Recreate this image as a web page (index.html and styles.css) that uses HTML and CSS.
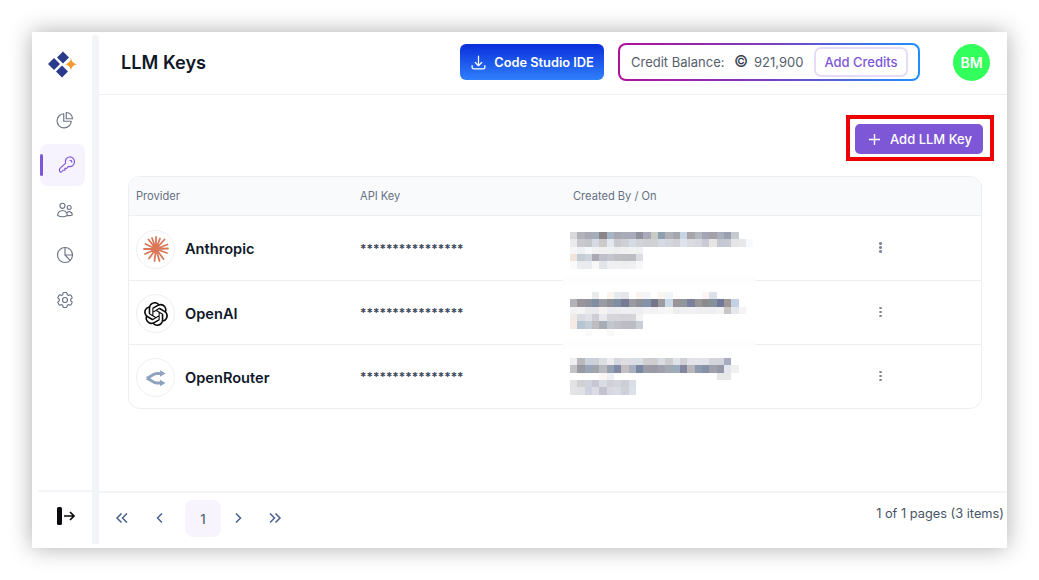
FILE: index.html
```html
<!DOCTYPE html>
<html lang="en">
<head>
<meta charset="utf-8">
<title>LLM Keys</title>
<link rel="stylesheet" href="styles.css">
</head>
<body>
<div class="shell">
  <aside class="sidebar">
    <div class="logo">
      <svg width="32" height="28" viewBox="0 0 32 28">
        <g fill="#2b3a8a">
          <path d="M16 1.500l6 6-6 6-6-6z"/>
          <path d="M7 8l6 6-6 6-6-6z"/>
          <path d="M15 15.500l6 6-6 6-6-6z"/>
        </g>
        <path d="M24 7.500c.5 4 2 6 6.500 6.800-4.500.8-6 2.800-6.500 6.700-.5-3.900-2-5.900-6.500-6.700 4.500-.8 6-2.800 6.500-6.800z" fill="#f79a2e"/>
      </svg>
    </div>
    <nav class="nav">
      <a class="nav-item"><svg class="nav-icon" viewBox="0 0 24 24"><path d="M10.500 4.500a8.500 8.500 0 1 0 9 9h-9V4.500Z"/><path d="M13.500 3v7.500H21A7.500 7.500 0 0 0 13.500 3Z"/></svg></a>
      <a class="nav-item active"><svg class="nav-icon" viewBox="0 0 24 24"><path d="M21 8.500a5.500 5.500 0 0 1-7.200 5.200L11.500 16H9.500v2.300H7.200L6 19.800C5 21 3 21 3 19v-1.500c0-.6.2-1.100.6-1.500l6.800-6.200A5.500 5.500 0 1 1 21 8.500Z"/><path d="M15.500 6.300a2.200 2.200 0 0 1 2.300 2.200"/></svg></a>
      <a class="nav-item small"><svg class="nav-icon" viewBox="0 0 24 24"><path d="M15 19.128a9.380 9.380 0 0 0 2.625.372 9.337 9.337 0 0 0 4.121-.952 4.125 4.125 0 0 0-7.533-2.493M15 19.128v-.003c0-1.113-.285-2.160-.786-3.070M15 19.128v.106A12.318 12.318 0 0 1 8.624 21c-2.331 0-4.512-.645-6.374-1.766l-.001-.109a6.375 6.375 0 0 1 11.964-3.070M12 6.375a3.375 3.375 0 1 1-6.750 0 3.375 3.375 0 0 1 6.750 0Zm8.250 2.250a2.625 2.625 0 1 1-5.250 0 2.625 2.625 0 0 1 5.250 0Z"/></svg></a>
      <a class="nav-item"><svg class="nav-icon" viewBox="0 0 24 24"><circle cx="12" cy="12" r="9"/><path d="M12 3v9h9M12 12l6.200 6.500"/></svg></a>
      <a class="nav-item"><svg class="nav-icon" viewBox="0 0 24 24"><path d="M9.594 3.940c.09-.542.56-.94 1.110-.94h2.593c.55 0 1.020.398 1.110.94l.213 1.281c.063.374.313.686.645.87.074.04.147.083.22.127.325.196.72.257 1.075.124l1.217-.456a1.125 1.125 0 0 1 1.370.49l1.296 2.247a1.125 1.125 0 0 1-.26 1.431l-1.003.827c-.293.241-.438.613-.43.992a7.723 7.723 0 0 1 0 .255c-.008.378.137.75.43.991l1.004.827c.424.35.534.955.26 1.430l-1.298 2.247a1.125 1.125 0 0 1-1.369.491l-1.217-.456c-.355-.133-.75-.072-1.076.124a6.470 6.470 0 0 1-.22.128c-.331.183-.581.495-.644.869l-.213 1.281c-.09.543-.56.94-1.110.94h-2.594c-.55 0-1.019-.398-1.110-.94l-.213-1.281c-.062-.374-.312-.686-.644-.87a6.520 6.520 0 0 1-.22-.127c-.325-.196-.72-.257-1.076-.124l-1.217.456a1.125 1.125 0 0 1-1.369-.49l-1.297-2.247a1.125 1.125 0 0 1 .26-1.431l1.004-.827c.292-.24.437-.613.43-.991a6.932 6.932 0 0 1 0-.255c.007-.38-.138-.751-.43-.992l-1.004-.827a1.125 1.125 0 0 1-.26-1.430l1.297-2.247a1.125 1.125 0 0 1 1.370-.491l1.216.456c.356.133.751.072 1.076-.124.072-.044.146-.086.22-.128.332-.183.582-.495.644-.869l.214-1.280Z"/><path d="M15 12a3 3 0 1 1-6 0 3 3 0 0 1 6 0Z"/></svg></a>
    </nav>
    <div class="side-foot">
      <svg width="20" height="20" viewBox="0 0 20 20" class="logout"><rect x="1" y="1" width="5" height="18" rx="1.500" fill="#0b0b0f"/><path d="M8 10h10M14 6l4 4-4 4" fill="none" stroke="#0b0b0f" stroke-width="1.700"/></svg>
    </div>
  </aside>
  <div class="divider"></div>
  <div class="main">
    <header class="topbar">
      <h1 class="title">LLM Keys</h1>
      <a class="studio-btn">
        <svg class="studio-icon" viewBox="0 0 24 24"><path d="M3 16.500v2.250A2.250 2.250 0 0 0 5.250 21h13.500A2.250 2.250 0 0 0 21 18.750V16.500M16.500 12 12 16.500m0 0L7.500 12m4.500 4.500V3"/></svg>
        Code Studio IDE
      </a>
      <div class="credit">
        <div class="credit-inner">
          <span class="credit-label">Credit Balance:</span>
          <span class="coin">©</span>
          <span class="credit-value">921,900</span>
          <a class="add-credits">Add Credits</a>
        </div>
      </div>
      <div class="avatar">BM</div>
    </header>
    <section class="content">
      <div class="actions">
        <a class="add-key">
          <svg class="plus" viewBox="0 0 14 14"><path d="M7 1v12M1 7h12"/></svg>
          Add LLM Key
        </a>
        <span class="callout"></span>
      </div>
      <div class="table">
        <div class="row head">
          <div class="cell first">Provider</div>
          <div class="cell">API Key</div>
          <div class="cell">Created By / On</div>
          <div class="cell"></div>
        </div>
        <div class="row">
          <div class="cell provider">
            <span class="badge">
              <svg width="26" height="26" viewBox="0 0 26 26" class="burst"><path d="M13 13L13 1M13 13L17 2.500M13 13L21.500 3.500M13 13L24.500 8.500M13 13L25 12.500M13 13L24 17M13 13L20.500 23M13 13L16.500 25M13 13L11.500 25M13 13L6 22.500M13 13L2 18M13 13L1 13M13 13L2.500 8M13 13L5.500 3.500M13 13L9 2"/></svg>
            </span>
            Anthropic
          </div>
          <div class="cell stars">****************</div>
          <div class="cell created"><div class="mosaic m1" data-m="0"></div></div>
          <div class="cell dots-cell"><span class="dots"><i></i><i></i><i></i></span></div>
        </div>
        <div class="row">
          <div class="cell provider">
            <span class="badge">
              <svg width="24" height="24" viewBox="0 0 24 24" fill="#0d0d0d"><path d="M22.2819 9.8211a5.9847 5.9847 0 0 0-.5157-4.9108 6.0462 6.0462 0 0 0-6.5098-2.9A6.0651 6.0651 0 0 0 4.9807 4.1818a5.9847 5.9847 0 0 0-3.9977 2.9 6.0462 6.0462 0 0 0 .7427 7.0966 5.98 5.98 0 0 0 .511 4.9107 6.051 6.051 0 0 0 6.5146 2.9001A5.9847 5.9847 0 0 0 13.2599 24a6.0557 6.0557 0 0 0 5.7718-4.2058 5.9894 5.9894 0 0 0 3.9977-2.9001 6.0557 6.0557 0 0 0-.7475-7.0729zm-9.022 12.6081a4.4755 4.4755 0 0 1-2.8764-1.0408l.1419-.0804 4.7783-2.7582a.7948.7948 0 0 0 .3927-.6813v-6.7369l2.02 1.1686a.071.071 0 0 1 .038.052v5.5826a4.504 4.504 0 0 1-4.4945 4.4944zm-9.6607-4.1254a4.4708 4.4708 0 0 1-.5346-3.0137l.142.0852 4.783 2.7582a.7712.7712 0 0 0 .7806 0l5.8428-3.3685v2.3324a.0804.0804 0 0 1-.0332.0615L9.74 19.9502a4.4992 4.4992 0 0 1-6.1408-1.6464zM2.3408 7.8956a4.485 4.485 0 0 1 2.3655-1.9728V11.6a.7664.7664 0 0 0 .3879.6765l5.8144 3.3543-2.0201 1.1685a.0757.0757 0 0 1-.071 0l-4.8303-2.7865A4.504 4.504 0 0 1 2.3408 7.872zm16.5963 3.8558L13.1038 8.364 15.1192 7.2a.0757.0757 0 0 1 .071 0l4.8303 2.7913a4.4944 4.4944 0 0 1-.6765 8.1042v-5.6772a.79.79 0 0 0-.407-.667zm2.0107-3.0231l-.142-.0852-4.7735-2.7818a.7759.7759 0 0 0-.7854 0L9.409 9.2297V6.8974a.0662.0662 0 0 1 .0284-.0615l4.8303-2.7866a4.4992 4.4992 0 0 1 6.6802 4.66zM8.3065 12.863l-2.02-1.1638a.0804.0804 0 0 1-.038-.0567V6.0742a4.4992 4.4992 0 0 1 7.3757-3.4537l-.142.0805L8.704 5.459a.7948.7948 0 0 0-.3927.6813zm1.0976-2.3654l2.602-1.4998 2.6069 1.4998v2.9994l-2.5974 1.4997-2.6067-1.4997Z"/></svg>
            </span>
            OpenAI
          </div>
          <div class="cell stars">****************</div>
          <div class="cell created"><span class="mask"></span><div class="mosaic m2" data-m="1"></div></div>
          <div class="cell dots-cell"><span class="dots"><i></i><i></i><i></i></span></div>
        </div>
        <div class="row">
          <div class="cell provider">
            <span class="badge">
              <svg width="22" height="18" viewBox="0 0 22 18" class="router"><path d="M1.500 9.300C6 8.500 7 4.500 12 4.500h4M1.500 9.300C6 10 7 14 12 14h4"/><path d="M15 1.300l5.500 3.200-5.500 3.200zM15 10.800l5.500 3.200-5.500 3.200z" class="router-head"/></svg>
            </span>
            OpenRouter
          </div>
          <div class="cell stars">****************</div>
          <div class="cell created"><span class="mask"></span><div class="mosaic m3" data-m="2"></div></div>
          <div class="cell dots-cell"><span class="dots"><i></i><i></i><i></i></span></div>
        </div>
      </div>
    </section>
    <footer class="pager-bar">
      <div class="pager">
        <a class="pg"><svg class="chev" viewBox="0 0 14 14"><path d="M6.500 2.500L2 7l4.500 4.500M12 2.500L7.500 7l4.500 4.500"/></svg></a>
        <a class="pg"><svg class="chev" viewBox="0 0 14 14"><path d="M9 2.500L4.500 7 9 11.500"/></svg></a>
        <a class="pg-num">1</a>
        <a class="pg narrow"><svg class="chev" viewBox="0 0 14 14"><path d="M5 2.500L9.500 7 5 11.500"/></svg></a>
        <a class="pg last"><svg class="chev" viewBox="0 0 14 14"><path d="M2 2.500L6.500 7 2 11.500M7.500 2.500L12 7l-4.500 4.500"/></svg></a>
      </div>
      <div class="pager-info">1 of 1 pages (3 items)</div>
    </footer>
  </div>
</div>
<script src="mosaic.js"></script>
</body>
</html>
```

FILE: styles.css
```css
* { box-sizing: border-box; }
html, body { margin: 0; height: 100%; background: #fff; overflow: hidden; }
body { padding: 32px; font-family: Inter, "Liberation Sans", sans-serif; color: #101828; }
a { display: inline-flex; }

.shell {
  width: 975px; height: 516px; background: #fff; display: flex;
  box-shadow: 0 0 22px rgba(0,0,0,.32);
}

.sidebar { width: 60px; flex: none; display: flex; flex-direction: column; }
.logo { height: 67px; padding: 18px 0 0 15px; }
.logo svg { display: block; }
.nav { display: flex; flex-direction: column; gap: 3px; padding-left: 8px; flex: 1; }
.nav-item { position: relative; width: 45px; height: 42px; align-items: center; padding-left: 15px; border-radius: 8px; }
.nav-icon { width: 20px; height: 20px; fill: none; stroke: #6b7585; stroke-width: 1.400; stroke-linecap: round; stroke-linejoin: round; }
.nav-item.small { padding-left: 16px; }
.nav-item.small .nav-icon { width: 18px; height: 18px; stroke-width: 1.500; }
.nav-item.active { background: #f6f2fe; padding-left: 17px; }
.nav-item.active .nav-icon { stroke: #7e57d6; }
.nav-item.active::before { content: ""; position: absolute; left: 0; top: 10px; width: 3px; height: 22px; background: #7e57d6; border-radius: 2px; }
.side-foot { height: 58px; margin-left: 6px; border-top: 2px solid #f2f4f8; padding: 14px 0 0 18px; }
.logout { display: block; }

.divider { width: 7px; flex: none; margin: 3px 0 4px; background: #f2f4f8; border-radius: 3px 3px 0 0; }

.main { flex: 1; min-width: 0; display: flex; flex-direction: column; }

.topbar { height: 63px; flex: none; display: flex; align-items: center; border-bottom: 1px solid #eceef2; padding: 0 17px 2px 22px; }
.title { margin: 0 auto 0 0; font-size: 18.200px; font-weight: 600; color: #101828; }
.studio-btn {
  width: 144px; height: 36px; align-items: center; justify-content: center; gap: 7px;
  border-radius: 6px; color: #fff; font-size: 12.800px; font-weight: 600;
  background: linear-gradient(180deg, #0a2ddb 0%, #2f80fb 100%);
}
.studio-icon { width: 17px; height: 17px; fill: none; stroke: #fff; stroke-width: 1.800; stroke-linecap: round; stroke-linejoin: round; }
.credit {
  width: 302px; height: 38px; margin-left: 14px; padding: 2px; border-radius: 8px;
  background: linear-gradient(90deg, #b0109a 0%, #7b3fc0 50%, #1e90ff 100%);
}
.credit-inner { height: 100%; background: #fff; border-radius: 6px; display: flex; align-items: center; padding-left: 11px; font-size: 13px; color: #565e6c; }
.credit-label { width: 103px; }
.coin { width: 14px; margin-right: 6px; font-size: 15.500px; line-height: 1; font-weight: 500; color: #3a4150; text-align: center; }
.credit-value { width: 60px; }
.add-credits { width: 94px; height: 30px; align-items: center; justify-content: center; border: 2px solid #e6dcfa; border-radius: 7px; color: #7e57d6; font-size: 13px; font-weight: 500; }
.avatar { width: 37px; height: 37px; margin-left: 33px; border-radius: 50%; background: #33ff5c; color: #fff; font-size: 14px; font-weight: 600; display: flex; align-items: center; justify-content: center; }

.content { flex: 1; min-height: 0; padding: 29px 25px 0 29px; }
.actions { position: relative; display: flex; justify-content: flex-end; height: 30px; margin: 0 -1px 22px 0; }
.add-key { width: 128px; height: 30px; padding-left: 2px; align-items: center; justify-content: center; gap: 9px; background: #7e57d6; border-radius: 5px; color: #fff; font-size: 13px; font-weight: 500; }
.plus { width: 13px; height: 13px; fill: none; stroke: #fff; stroke-width: 1.500; }
.callout { position: absolute; right: -11px; top: -9px; width: 148px; height: 46px; border: 4px solid #ee0000; }

.table { border: 1px solid #eceef2; border-radius: 12px; overflow: hidden; }
.row { display: grid; grid-template-columns: 223px 213px 300px 1fr; height: 64px; align-items: center; border-top: 1px solid #eceef2; }
.row.head { height: 39px; border-top: 0; background: #f9fafb; border-bottom: 1px solid #eceef2; }
.row.head + .row { border-top: 0; height: 64px; }
.cell { padding-left: 8px; font-size: 11.100px; color: #667085; font-weight: 400; }
.cell.first { padding-left: 7px; }
.provider { display: flex; align-items: center; gap: 10px; padding: 2px 0 0 7px; font-size: 14.600px; font-weight: 600; color: #101828; }
.badge { width: 39px; height: 39px; flex: none; border: 1px solid #eceef2; border-radius: 50%; display: flex; align-items: center; justify-content: center; }
.burst { fill: none; stroke: #d97757; stroke-width: 1.800; stroke-linecap: round; }
.router { fill: none; stroke: #8fa3bf; stroke-width: 3; }
.router-head { fill: #8fa3bf; stroke: none; }
.stars { font-size: 12px; font-weight: 600; color: #344054; }
.created { position: relative; height: 100%; }
.mask { position: absolute; left: -2px; top: -4px; width: 193px; height: 8px; background: #fdfdfd; }
.mosaic { position: absolute; left: 5px; display: grid; grid-template-columns: repeat(25, 7.330px); grid-auto-rows: 7.330px; filter: blur(.5px); }
.m1 { top: 16px; }
.m2 { top: 11px; }
.m3 { top: 13px; }
.dots-cell { padding-left: 0; }
.dots { display: flex; flex-direction: column; gap: 1.500px; width: 3px; margin: 0 0 1px 14px; }
.dots i { width: 3px; height: 2.500px; border-radius: 50%; background: #7b849a; }

.pager-bar { height: 57px; flex: none; border-top: 2px solid #f2f4f8; display: flex; justify-content: space-between; padding: 0 3px 0 4px; }
.pager { display: flex; align-items: center; padding-bottom: 5px; }
.pg { width: 38px; height: 36px; align-items: center; justify-content: center; }
.pg.narrow { width: 33px; }
.pg.last { margin-left: 2px; }
.chev { width: 14px; height: 14px; fill: none; stroke: #48618c; stroke-width: 1.500; }
.pg-num { width: 36px; height: 37px; margin-left: 6px; align-items: center; justify-content: center; background: #f7f4fe; border-radius: 8px; color: #5b6472; font-size: 13px; font-weight: 500; padding-top: 2px; }
.pager-info { font-size: 12.800px; color: #475467; padding-top: 13px; white-space: nowrap; }
```

FILE: mosaic.js
```js
var MOSAICS = [
  [
    "d8d8da b2b2bb a9a9b3 a5adb9 8a8489 a7b6c5 a9a7b2 a9abb9 a8abb9 8f919f a9a9ba c8cac4 8f9fb0 b0b0b8 a5a5ae c9d5e2 a8a5a8 b3b7c0 a5a4b4 a3a2a9 a9afbd 9ba0b0 c6cad0",
    "ebebed c9c9cf c5c6ca d5dae3 ccc9c9 e3e7ef c9c9d0 ced0d4 d6dae2 d3d4da cfd0d5 cfd1d5 d4dbe4 d3d6dc cfd1d6 dfe3eb d9dbde d4d9df c9cad6 e8e4e2 c5c8d2 c6c8d2 e5e5e8 e8e8ea f7fafc",
    "f6f6f6 eff0f2 f7f8f9 f2f2f3 f0f0f2 eff0f2 eeeeef f0f0f2 f2f2f3 f0f1f3",
    "f0e4dc c4ccd6 ccd3db aaa8b2 c0c0c8 c4c6cf bfbfc6 bdbdc4 bcbcc3 dadee4",
    "fafafa eaebef eaebef f8f7f7 e3e4ea f0f0f2 eff0f2 eeeef0 f0f0f2 f7f7f9"
  ],
  [
    "- - - e9ecec - fbf5f0 e6ebf2 e5e5ea - fbf3ee f3f5f9 - fbf5f0 f1f4f8 - - - - fcf5f3 dfe1e8",
    "b2b2ba 9c9499 8f939e 808ea0 9c9ca4 8c9098 7f8ea0 757b94 9a9aa2 8f9198 8394aa 76768a 9c9a9e c9d7e6 9a9498 8f979c 7a7f9c 9a9698 8a8a8f 86929a 72789a a09896 c2d2e2",
    "f2f2f2 f4f4f4 e9ebef e9ebef f5f2ef ecedf0 ecedf0 eeeff2 edeef1 eceef2 f2f3f5 f2f2f4 f4f5f7 f6f6f7 eceef0 eef0f2 f2f2f4 eeeff1 eef0f2 eeeff2 f2f2f4 c9c6c4 e2e8ee f2f4f6",
    "f0ebe6 d8dbe2 e0e2e8 d0ced4 e8eaee d4d4d9 d5d5da d3d3d8 d5d5d9 f2f2f3",
    "f7ece4 b7c4d2 c2ccd6 bdbcc0 a8acb4 c4c6ce bfc0c8 bcbcc4 bcbdc4 c9ced6",
    "- - fafafa - - fbf9f8"
  ],
  [
    "eeeeee b8b8bc c9d1dc ccd0da dddde2 eaecf0 d4d8e0 e0dde0 d9dee6 d9dee6 cfcfd2 cfcdd2 d8dee6 cfcdd0 dfe3ea cfcfd4 e2e2e8 e2e4ea e0e4ea d4d4dc d4d4dc a8adbd",
    "c4c4c8 9a98a0 9aa6b8 a0a4ac b8babf 96a0b2 7f8ba4 c5bfc4 a8b0be 7a86a2 9a9ca8 9a9aa4 a0a0ac a4aab4 9cacbc 8486a0 b8b6b8 8e9aae 8890a8 a0a0ac 9498a8 e4e8ee f0f0f2",
    "- - - - fbf5f3 eef1f3 - - - - - - - - - - - - - - e8e8ea e8e8ea",
    "e2e2e4 d0d0d4 d0d2dc c8c8d4 d8dde2 d0d0d8 d4d4dc cccfd6 d8dde6",
    "e4e4e6 dfe2e2 cfd2de dcdce4 c4c2d0 d8d8e0 d8dce4 d0d0d8 dce0e8"
  ]
];

document.querySelectorAll(".mosaic").forEach(function (box) {
  MOSAICS[+box.dataset.m].forEach(function (row) {
    var cells = row.split(" ");
    for (var i = 0; i < 25; i++) {
      var cell = document.createElement("span");
      if (cells[i] && cells[i] !== "-") {
        cell.style.background = "#" + cells[i];
      }
      box.appendChild(cell);
    }
  });
});
```
